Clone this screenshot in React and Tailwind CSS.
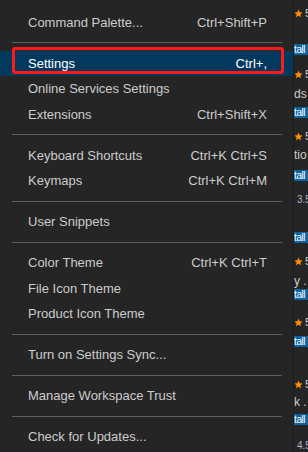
import React from "react";

const groups = [
  [["Command Palette...", "Ctrl+Shift+P"]],
  [
    ["Settings", "Ctrl+,", true],
    ["Online Services Settings", ""],
    ["Extensions", "Ctrl+Shift+X"],
  ],
  [
    ["Keyboard Shortcuts", "Ctrl+K Ctrl+S"],
    ["Keymaps", "Ctrl+K Ctrl+M"],
  ],
  [["User Snippets", ""]],
  [
    ["Color Theme", "Ctrl+K Ctrl+T"],
    ["File Icon Theme", ""],
    ["Product Icon Theme", ""],
  ],
  [["Turn on Settings Sync...", ""]],
  [["Manage Workspace Trust", ""]],
  [["Check for Updates...", ""]],
];

function Item({ label, keys, active }) {
  return (
    <div
      className={
        "relative h-[25.5px] flex items-center justify-between pl-[28px] pr-[26px] " +
        (active ? "bg-[#04395e] text-white" : "text-[#cccccc]")
      }
    >
      <span>{label}</span>
      {keys && <span className={active ? "text-white" : "text-[#cccccc]"}>{keys}</span>}
      {active && (
        <div className="absolute left-[12px] right-[9px] top-[-3.5px] bottom-[2px] border-[3px] border-[#ff1a1a] rounded-[3px]" />
      )}
    </div>
  );
}

function Star({ mt }) {
  return (
    <div className={"h-[12px] flex items-center gap-[2px] whitespace-nowrap leading-none " + mt}>
      <svg width="9" height="9" viewBox="0 0 24 24" className="shrink-0">
        <path
          d="M12 1.5l3.1 7.1 7.7.7-5.8 5.1 1.7 7.6L12 18l-6.7 4 1.7-7.6-5.8-5.1 7.7-.7z"
          fill="#ff8e00"
        />
      </svg>
      <span className="text-[11px] text-[#cccccc]">5</span>
    </div>
  );
}

function Badge({ mt }) {
  return (
    <div className={"h-[11px] bg-[#0e639c] text-white text-[10px] leading-[11px] whitespace-nowrap tracking-[-0.4px] " + mt}>
      tall
    </div>
  );
}

function Line({ text, mt }) {
  return (
    <div className={"h-[12px] flex items-center text-[12px] text-[#cccccc] whitespace-nowrap leading-none " + mt}>
      {text}
    </div>
  );
}

function Rating({ text, mt }) {
  return (
    <div className={"h-[12px] flex items-center text-[10px] text-[#a9b4c8] whitespace-nowrap leading-none pl-[3px] " + mt}>
      {text}
    </div>
  );
}

export default function App() {
  return (
    <div
      className="w-[308px] h-[452px] overflow-hidden bg-[#252526] flex text-[13px]"
      style={{ fontFamily: '"Liberation Sans", Arial, sans-serif' }}
    >
      <div className="w-[294px] shrink-0 pt-[9.5px] border-r border-[#1b1b1c]">
        {groups.map((g, gi) => (
          <div key={gi}>
            {gi > 0 && (
              <div className="h-[15.5px] pt-[7px]">
                <div className="mx-[12px] mr-[11px] h-px bg-[#5f5f5f]" />
              </div>
            )}
            {g.map(([label, keys, active]) => (
              <Item key={label} label={label} keys={keys} active={active} />
            ))}
          </div>
        ))}
      </div>

      <div className="flex-1 overflow-hidden flex flex-col">
        <Star mt="mt-[8px]" />
        <Badge mt="mt-[24px]" />
        <Star mt="mt-[14px]" />
        <Line text="ds" mt="mt-[7px]" />
        <Badge mt="mt-[7px]" />
        <Star mt="mt-[13px]" />
        <Line text="tio" mt="mt-[6px]" />
        <Badge mt="mt-[9px]" />
        <Rating text="3.5" mt="mt-[13px]" />
        <Badge mt="mt-[26px]" />
        <Star mt="mt-[13px]" />
        <Line text="y ." mt="mt-[8px]" />
        <Badge mt="mt-[2px]" />
        <Star mt="mt-[16px]" />
        <Badge mt="mt-[8px]" />
        <Star mt="mt-[31px]" />
        <Line text="k ." mt="mt-[6px]" />
        <Badge mt="mt-[6px]" />
        <Rating text="4.5" mt="mt-[15px]" />
      </div>
    </div>
  );
}
